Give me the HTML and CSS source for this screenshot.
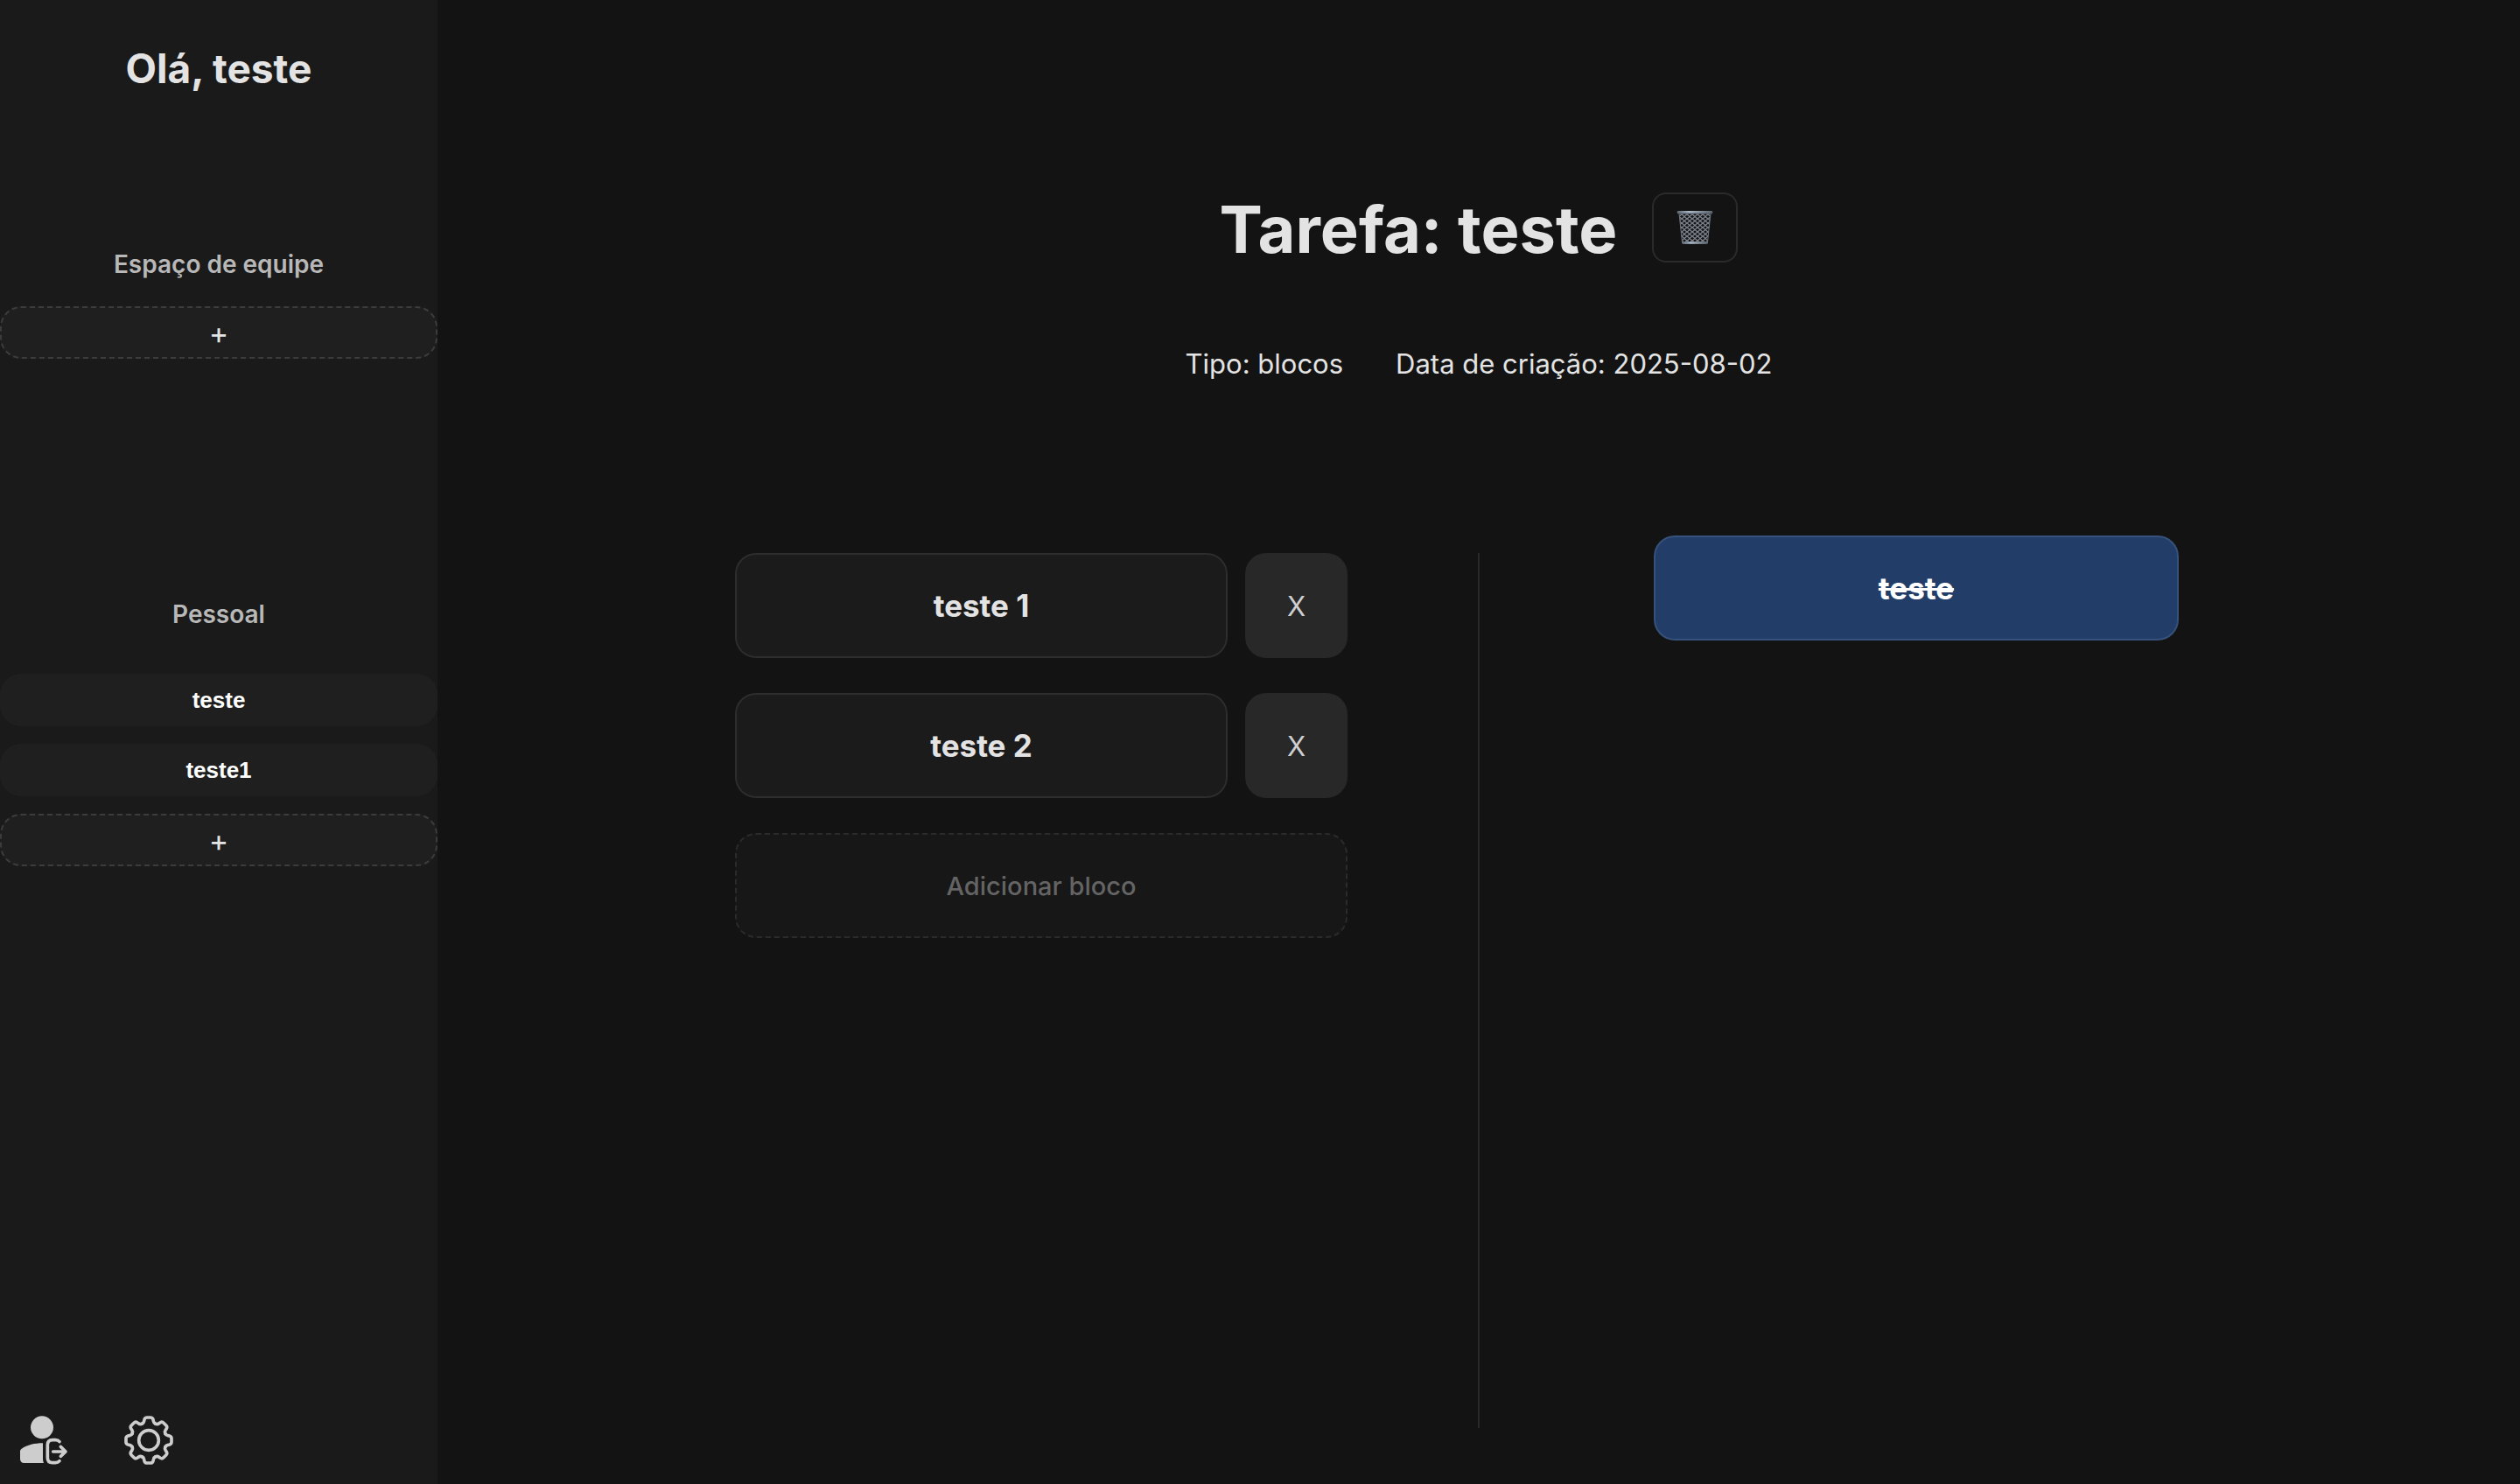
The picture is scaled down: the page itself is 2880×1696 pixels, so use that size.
FILE: index.html
```html
<!DOCTYPE html>
<html lang="pt-BR">
<head>
<meta charset="utf-8">
<meta name="viewport" content="width=device-width, initial-scale=1">
<title>Tarefa: teste</title>
<link rel="stylesheet" href="styles.css">
</head>
<body>
<div class="app">
  <aside class="sidebar">
    <h2 class="greeting">Olá, teste</h2>
    <section class="space space-team">
      <h3 class="space-title">Espaço de equipe</h3>
      <button class="add-task" type="button" aria-label="Adicionar tarefa de equipe">+</button>
    </section>
    <section class="space space-personal">
      <h3 class="space-title">Pessoal</h3>
      <button class="task" type="button">teste</button>
      <button class="task" type="button">teste1</button>
      <button class="add-task" type="button" aria-label="Adicionar tarefa pessoal">+</button>
    </section>
    <footer class="actions">
      <button class="icon-button" type="button" aria-label="Sair">
        <svg class="icon" viewBox="60 78 180 180" aria-hidden="true">
          <circle cx="144" cy="124" r="39" fill="currentColor"/>
          <path fill="currentColor" d="M147 178V232Q147 240 150 246H83Q69 246 69 232V205Q69 200 74 197C94 184 118 178 147 178Z"/>
          <g fill="none" stroke="currentColor" stroke-width="11" stroke-linecap="round" stroke-linejoin="round">
            <path d="M204 173Q199 167 190 167H180Q163 167 163 184V228Q163 245 180 245H190Q199 245 204 239"/>
            <path d="M182 207H225M208 190L225 207L208 223"/>
          </g>
        </svg>
      </button>
      <button class="icon-button" type="button" aria-label="Configurações">
        <svg class="icon" viewBox="-90 -90 180 180" aria-hidden="true">
          <defs>
            <path id="tooth" d="M-23.3-56.4Q-17-59-16-66L-15-71Q-13-78-6-78H6Q13-78 15-71L16-66Q17-59 23.3-56.4"/>
          </defs>
          <g fill="none" stroke="currentColor" stroke-width="11" stroke-linecap="round">
            <circle r="34"/>
            <use href="#tooth"/>
            <use href="#tooth" transform="rotate(45)"/>
            <use href="#tooth" transform="rotate(90)"/>
            <use href="#tooth" transform="rotate(135)"/>
            <use href="#tooth" transform="rotate(180)"/>
            <use href="#tooth" transform="rotate(225)"/>
            <use href="#tooth" transform="rotate(270)"/>
            <use href="#tooth" transform="rotate(315)"/>
          </g>
        </svg>
      </button>
    </footer>
  </aside>
  <main class="content">
    <header class="task-header">
      <h1 class="task-title">Tarefa: teste</h1>
      <button class="delete" type="button" aria-label="Excluir tarefa">
        <svg class="trash" viewBox="0 0 126 120" aria-hidden="true">
          <defs>
            <pattern id="mesh" width="18" height="15" patternUnits="userSpaceOnUse">
              <path d="M0 0L18 15M18 0L0 15" stroke="#7d8591" stroke-width="4"/>
            </pattern>
            <linearGradient id="metal" x1="0" x2="1">
              <stop offset="0" stop-color="#5f6873"/>
              <stop offset=".35" stop-color="#a9b8c8"/>
              <stop offset="1" stop-color="#5c646e"/>
            </linearGradient>
          </defs>
          <path d="M9 12H117L106 114H20Z" fill="url(#mesh)" stroke="#6e757f" stroke-width="3"/>
          <rect x="2" y="3" width="122" height="9" rx="4" fill="url(#metal)"/>
          <path d="M4 12H122" stroke="#4c535c" stroke-width="3"/>
          <rect x="19" y="109" width="88" height="7" rx="3" fill="url(#metal)"/>
        </svg>
      </button>
    </header>
    <div class="meta">
      <span>Tipo: blocos</span>
      <span>Data de criação: 2025-08-02</span>
    </div>
    <div class="board">
      <section class="pending">
        <div class="row">
          <button class="block" type="button">teste 1</button>
          <button class="remove" type="button" aria-label="Remover teste 1">X</button>
        </div>
        <div class="row">
          <button class="block" type="button">teste 2</button>
          <button class="remove" type="button" aria-label="Remover teste 2">X</button>
        </div>
        <button class="add-block" type="button">Adicionar bloco</button>
      </section>
      <div class="divider"></div>
      <section class="finished">
        <button class="block block-done" type="button">teste</button>
      </section>
    </div>
  </main>
</div>
</body>
</html>
```
FILE: styles.css
```css
* {
  box-sizing: border-box;
}

body {
  margin: 0;
  background: #131313;
  color: #e3e3e3;
  font-family: Inter, "Liberation Sans", sans-serif;
}

h1,
h2,
h3 {
  margin: 0;
}

button {
  margin: 0;
  padding: 0;
  border: 0;
  background: none;
  color: inherit;
  font-family: inherit;
  cursor: pointer;
}

.app {
  display: grid;
  grid-template-columns: 500px 1fr;
  min-height: 100vh;
}

.sidebar {
  display: flex;
  flex-direction: column;
  background: #1a1a1a;
  text-align: center;
}

.greeting {
  padding-top: 48px;
  font-size: 46px;
  line-height: 60px;
  font-weight: 700;
}

.space {
  display: flex;
  flex-direction: column;
  gap: 20px;
}

.space-team {
  padding-top: 174px;
}

.space-personal {
  padding-top: 272px;
}

.space-title {
  margin-bottom: 8px;
  color: #b8b8b8;
  font-size: 28px;
  line-height: 40px;
  font-weight: 600;
}

.space-personal .space-title {
  margin-bottom: 28px;
}

.task,
.add-task {
  height: 60px;
  border-radius: 24px;
  background: #1f1f1f;
}

.task {
  color: #fff;
  font-family: "Liberation Sans", Arial, sans-serif;
  font-size: 26px;
  font-weight: 700;
}

.add-task {
  border: 2px dashed #3c3c3c;
  font-size: 34px;
  font-weight: 400;
}

.actions {
  display: flex;
  gap: 60px;
  margin-top: auto;
  padding: 20px;
}

.icon-button {
  color: #cdcdcd;
}

.icon {
  display: block;
  width: 60px;
  height: 60px;
}

.content {
  display: flex;
  flex-direction: column;
  align-items: center;
  padding: 210px 0 64px;
}

.task-header {
  display: flex;
  align-items: center;
  gap: 40px;
}

.task-title {
  padding-top: 4px;
  font-size: 74px;
  line-height: 96px;
  font-weight: 700;
}

.delete {
  display: grid;
  place-items: center;
  width: 98px;
  height: 80px;
  border: 2px solid #2a2a2a;
  border-radius: 16px;
}

.trash {
  width: 42px;
  height: 40px;
}

.meta {
  display: flex;
  gap: 60px;
  margin-top: 86px;
  font-size: 31px;
  line-height: 40px;
}

.board {
  display: grid;
  grid-template-columns: 1fr 0 1fr;
  width: 100%;
  max-width: 2000px;
  margin-top: 176px;
}

.pending,
.finished {
  display: flex;
  flex-direction: column;
  align-items: center;
  gap: 40px;
}

.pending {
  padding-top: 20px;
}

.row {
  display: flex;
  gap: 20px;
  width: 70%;
}

.block,
.remove,
.add-block {
  height: 120px;
  border-radius: 24px;
}

.block {
  flex: 1;
  border: 2px solid #2d2d2d;
  background: #1b1b1b;
  font-size: 35px;
  font-weight: 700;
}

.remove {
  width: 117px;
  background: #282828;
  color: #cfcfcf;
  font-size: 31px;
}

.add-block {
  width: 70%;
  border: 2px dashed #2b2b2b;
  background: #171717;
  color: #646464;
  font-size: 29px;
  font-weight: 500;
}

.divider {
  justify-self: center;
  width: 2px;
  min-height: 1000px;
  margin-top: 20px;
  background: #292929;
}

.block-done {
  flex: none;
  width: 60%;
  border-color: #36517c;
  background: #223e68;
  color: #fff;
  text-decoration: line-through;
}
```
